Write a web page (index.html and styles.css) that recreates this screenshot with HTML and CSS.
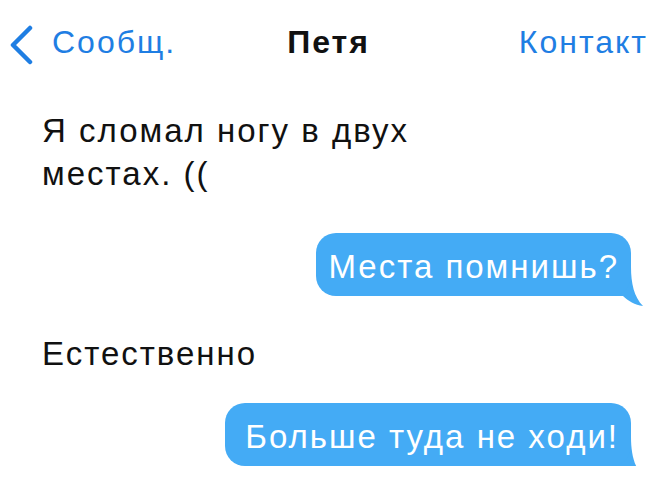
FILE: index.html
```html
<!DOCTYPE html>
<html lang="ru">
<head>
    <meta charset="UTF-8">
    <meta name="viewport" content="width=device-width, initial-scale=1.0">
    <title>Петя</title>
    <link rel="stylesheet" href="styles.css">
</head>
<body>
    <div class="header">
        <a class="back" href="#">
            <svg class="chevron" width="24" height="42" viewBox="0 0 24 42">
                <path d="M21 4 L4 21 L21 38" fill="none" stroke="#1f7ee3" stroke-width="4.5" stroke-linecap="round" stroke-linejoin="round"/>
            </svg>
            <span>Сообщ.</span>
        </a>
        <div class="title">Петя</div>
        <a class="contact" href="#">Контакт</a>
    </div>

    <div class="chat">
        <div class="msg in">Я сломал ногу в двух<br>местах. ((</div>
        <div class="msg out">
            Места помнишь?
            <svg class="tail" width="34" height="40" viewBox="0 0 34 40">
                <path d="M0 0 L20 0 C20 16 23 30 32 39 C24 38 17 34 12 29 L0 29 Z" fill="#44abf5"/>
            </svg>
        </div>
        <div class="msg in second">Естественно</div>
        <div class="msg out last">
            Больше туда не ходи!
            <svg class="tail" width="34" height="40" viewBox="0 0 34 40">
                <path d="M0 0 L20 0 C20 16 23 30 32 39 C24 38 17 34 12 29 L0 29 Z" fill="#44abf5"/>
            </svg>
        </div>
    </div>
</body>
</html>
```

FILE: styles.css
```css
body {
    margin: 0;
    background: #fff;
    font-family: "Liberation Sans", Arial, sans-serif;
    color: #111;
}
.header {
    display: grid;
    grid-template-columns: 1fr auto 1fr;
    align-items: center;
    padding: 19px 12px 0 9px;
    height: 40px;
    font-size: 32px;
    letter-spacing: 2px;
}
.header a {
    color: #1f7ee3;
    text-decoration: none;
}
.back {
    display: flex;
    align-items: center;
    gap: 19px;
}
.chevron {
    margin-top: 5px;
}
.title {
    font-weight: bold;
    color: #111;
}
.contact {
    justify-self: end;
}
.chat {
    display: flex;
    flex-direction: column;
    padding: 50px 29px 0 42px;
}
.msg {
    font-size: 33px;
    letter-spacing: 2px;
}
.msg.in {
    line-height: 43px;
    align-self: flex-start;
}
.msg.second {
    margin-top: 36px;
}
.msg.out {
    position: relative;
    align-self: flex-end;
    background: #44abf5;
    color: #fff;
    border-radius: 20px;
    line-height: 58px;
    padding: 5px 12px 0 12px;
    margin-top: 38px;
}
.msg.last {
    margin-top: 28px;
    padding-left: 20px;
}
/* tail sits under the bubble so it never hides the text */
.tail {
    position: absolute;
    right: -14px;
    bottom: -11px;
    z-index: -1;
}
```
